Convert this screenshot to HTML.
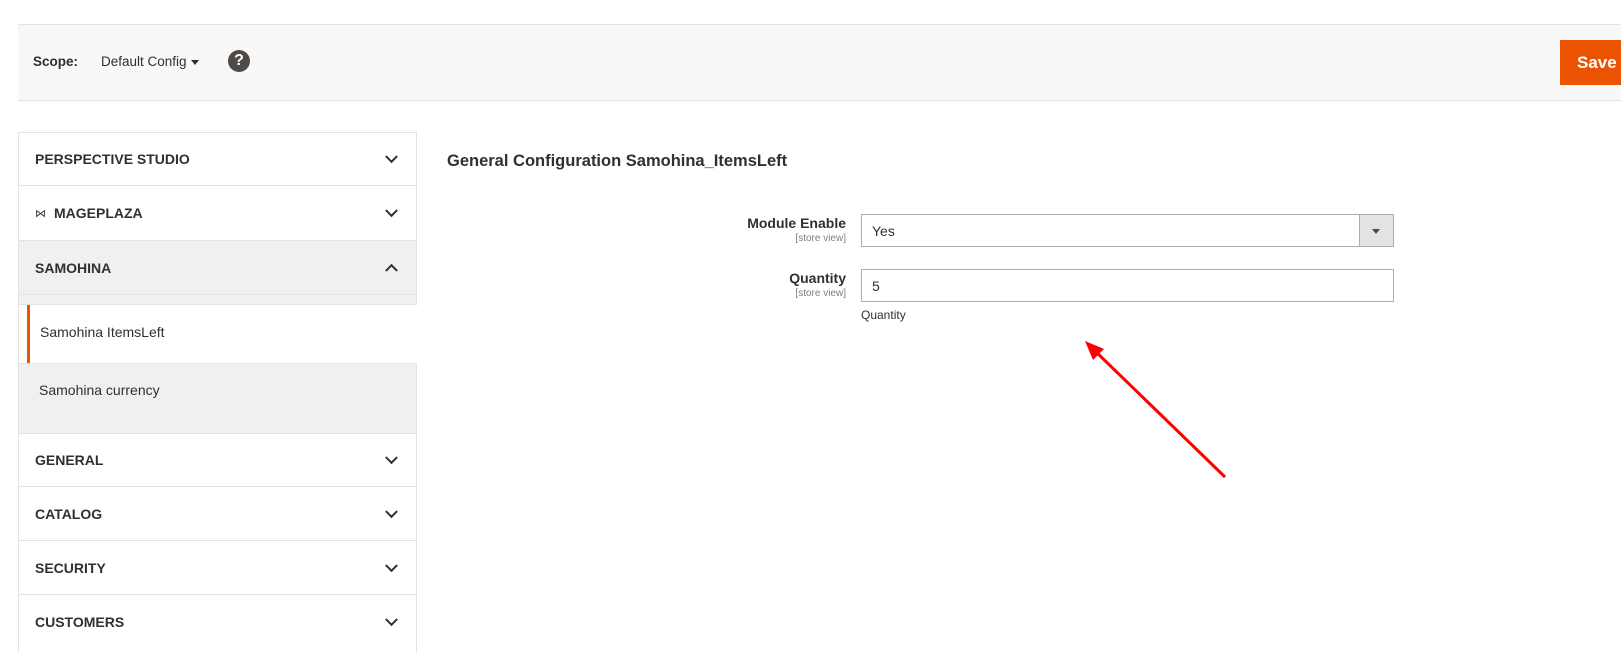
<!DOCTYPE html>
<html><head><meta charset="utf-8"><style>
*{box-sizing:border-box;margin:0;padding:0}
body{width:1621px;height:643px;overflow:hidden;background:#fff;font-family:"Liberation Sans",sans-serif;color:#303030;position:relative}
.a{position:absolute}
.bar{left:18px;top:24px;width:1603px;height:77px;background:#f8f8f8;border-top:1px solid #e3e3e3;border-bottom:1px solid #e3e3e3}
.side{left:18px;top:132px;width:399px;height:520px;border:1px solid #e3e3e3;border-bottom:none}
.row{position:absolute;left:0;width:397px;border-bottom:1px solid #e3e3e3;font-weight:bold;font-size:14px;color:#303030;padding-left:16px;display:flex;align-items:center}
.chev{position:absolute;right:20px;top:50%;width:9px;height:9px;border-right:2px solid #303030;border-bottom:2px solid #303030;transform:translateY(-75%) rotate(45deg)}
.up{transform:translateY(-25%) rotate(-135deg)}
.lbl{font-weight:bold;font-size:14px;text-align:right;width:200px}
.sv{font-size:10px;color:#808080;text-align:right;width:200px}
</style></head><body>
<div class="a bar"></div>
<div class="a" style="left:33px;top:54px;font-size:13.5px;font-weight:bold;color:#303030">Scope:</div>
<div class="a" style="left:101px;top:54px;font-size:13.5px;color:#303030">Default Config</div>
<div class="a" style="left:191px;top:60px;width:0;height:0;border-left:4.5px solid transparent;border-right:4.5px solid transparent;border-top:5px solid #303030"></div>
<div class="a" style="left:228px;top:50px;width:22px;height:22px;border-radius:50%;background:#514943;color:#fff;font-weight:bold;font-size:16px;text-align:center;line-height:22px">?</div>
<div class="a" style="left:1560px;top:40px;width:61px;height:45px;background:#eb5202;color:#fff;font-size:17px;font-weight:bold;padding:13px 0 0 17px">Save</div>

<div class="a side">
<div class="row" style="top:0;height:53px">PERSPECTIVE STUDIO<span class="chev"></span></div>
<div class="row" style="top:53px;height:55px"><span style="font-size:11px;margin-right:8px;font-weight:normal">⋈</span>MAGEPLAZA<span class="chev"></span></div>
<div class="row" style="top:108px;height:54px;background:#f0f0f0">SAMOHINA<span class="chev up"></span></div>
<div class="a" style="left:0;top:162px;width:397px;height:10px;background:#f0f0f0;border-bottom:1px solid #e3e3e3"></div>
<div class="a" style="left:8px;top:172px;width:392px;height:58px;background:#fff;border-left:3px solid #eb5202;font-size:14px;padding:19px 0 0 10px;color:#303030">Samohina ItemsLeft</div>
<div class="a" style="left:0;top:230px;width:397px;height:71px;background:#f0f0f0;border-top:1px solid #e3e3e3;border-bottom:1px solid #e3e3e3;font-size:14px;padding:18px 0 0 20px;color:#303030">Samohina currency</div>
<div class="row" style="top:301px;height:53px">GENERAL<span class="chev"></span></div>
<div class="row" style="top:354px;height:54px">CATALOG<span class="chev"></span></div>
<div class="row" style="top:408px;height:54px">SECURITY<span class="chev"></span></div>
<div class="row" style="top:462px;height:54px;border-bottom:none">CUSTOMERS<span class="chev"></span></div>
</div>

<div class="a" style="left:447px;top:152px;font-size:16.5px;font-weight:bold;color:#303030">General Configuration Samohina_ItemsLeft</div>

<div class="a lbl" style="left:646px;top:215px">Module Enable</div>
<div class="a sv" style="left:646px;top:233px">[store view]</div>
<div class="a" style="left:861px;top:214px;width:533px;height:33px;border:1px solid #adadad;font-size:14px;padding:8px 0 0 10px">Yes</div>
<div class="a" style="left:1359px;top:214px;width:35px;height:33px;background:#e3e3e3;border:1px solid #adadad"></div>
<div class="a" style="left:1372px;top:229px;width:0;height:0;border-left:4px solid transparent;border-right:4px solid transparent;border-top:5px solid #514943"></div>

<div class="a lbl" style="left:646px;top:270px">Quantity</div>
<div class="a sv" style="left:646px;top:288px">[store view]</div>
<div class="a" style="left:861px;top:269px;width:533px;height:33px;border:1px solid #adadad;font-size:14px;padding:8px 0 0 10px">5</div>
<div class="a" style="left:861px;top:308px;font-size:12px;color:#303030">Quantity</div>

<svg class="a" style="left:0;top:0" width="1621" height="643">
<line x1="1225" y1="477" x2="1093" y2="349" stroke="#ff0000" stroke-width="3"/>
<polygon points="1085,341 1104,349 1093,360" fill="#ff0000"/>
</svg>
</body></html>
